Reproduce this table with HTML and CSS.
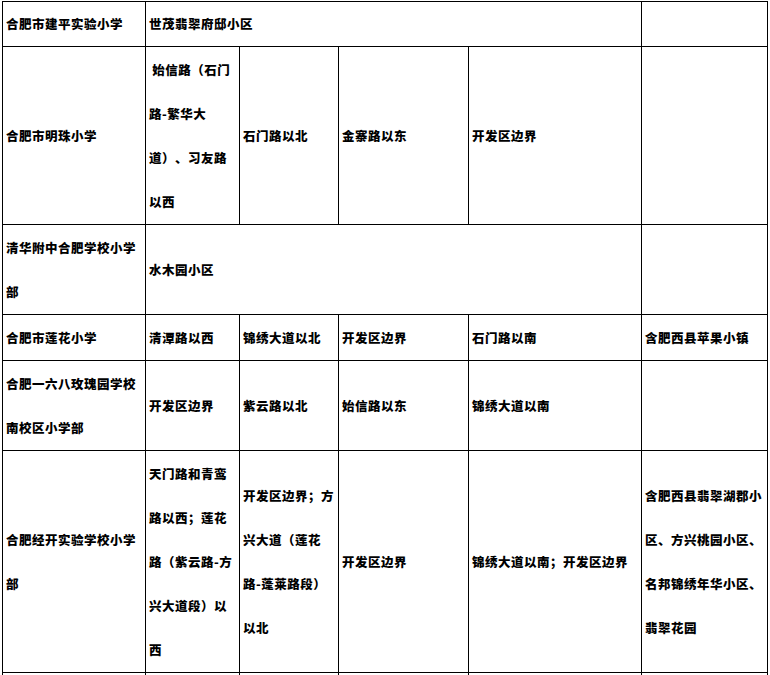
FILE: index.html
```html
<!DOCTYPE html>
<html lang="zh-CN">
<head>
<meta charset="utf-8">
<title>学区划分</title>
<link rel="stylesheet" href="styles.css">
</head>
<body>
<table class="grid">
  <colgroup>
    <col class="c1"><col class="c2"><col class="c3"><col class="c4"><col class="c5"><col class="c6">
  </colgroup>
  <tbody>
    <tr class="r1">
      <td>合肥市建平实验小学</td>
      <td colspan="4">世茂翡翠府邸小区</td>
      <td></td>
    </tr>
    <tr class="r2">
      <td>合肥市明珠小学</td>
      <td>&nbsp;始信路（石门路-繁华大道）、习友路以西</td>
      <td>石门路以北</td>
      <td>金寨路以东</td>
      <td>开发区边界</td>
      <td></td>
    </tr>
    <tr class="r3">
      <td>清华附中合肥学校小学部</td>
      <td colspan="4">水木园小区</td>
      <td></td>
    </tr>
    <tr class="r4">
      <td>合肥市莲花小学</td>
      <td>清潭路以西</td>
      <td>锦绣大道以北</td>
      <td>开发区边界</td>
      <td>石门路以南</td>
      <td>含肥西县苹果小镇</td>
    </tr>
    <tr class="r5">
      <td>合肥一六八玫瑰园学校南校区小学部</td>
      <td>开发区边界</td>
      <td>紫云路以北</td>
      <td>始信路以东</td>
      <td>锦绣大道以南</td>
      <td></td>
    </tr>
    <tr class="r6">
      <td>合肥经开实验学校小学部</td>
      <td>天门路和青鸾路以西；莲花路（紫云路-方兴大道段）以西</td>
      <td>开发区边界；方兴大道（莲花路-蓬莱路段）以北</td>
      <td>开发区边界</td>
      <td>锦绣大道以南；开发区边界</td>
      <td>含肥西县翡翠湖郡小区、方兴桃园小区、名邦锦绣年华小区、翡翠花园</td>
    </tr>
    <tr class="r7">
      <td></td><td></td><td></td><td></td><td></td><td></td>
    </tr>
  </tbody>
</table>
</body>
</html>
```

FILE: styles.css
```css
html, body {
  margin: 0;
  padding: 0;
  background: #ffffff;
}

body {
  padding: 1px 0 0 2px;
  font-family: "Noto Sans CJK SC", "Noto Sans", sans-serif;
  font-weight: 900;
  font-size: 12.5px;
  letter-spacing: 0.5px;
  color: #000000;
  overflow: hidden;
  height: 675px;
  box-sizing: border-box;
}

.grid {
  border-collapse: collapse;
  table-layout: fixed;
  width: 765px;
}

.c1 { width: 143px; }
.c2 { width: 94px; }
.c3 { width: 99px; }
.c4 { width: 130px; }
.c5 { width: 173px; }
.c6 { width: 126px; }

.grid td {
  border: 1px solid #000000;
  padding: 0 3px 0 3px;
  line-height: 44px;
  vertical-align: middle;
  text-align: left;
  word-break: normal;
  text-spacing-trim: space-all;
}

.r1 { height: 45px; }
.r2 { height: 178px; }
.r3 { height: 90px; }
.r4 { height: 46px; }
.r5 { height: 90px; }
.r6 { height: 222px; }
.r7 { height: 20px; }
```
